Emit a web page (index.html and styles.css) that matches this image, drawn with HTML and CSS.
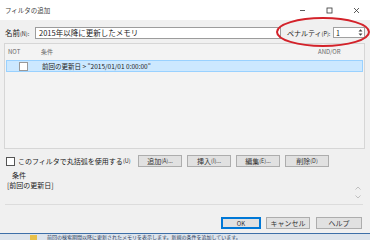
FILE: index.html
```html
<!DOCTYPE html>
<html lang="ja">
<head>
    <meta charset="UTF-8">
    <title>フィルタの追加</title>
    <link rel="stylesheet" href="styles.css">
</head>
<body>
    <div class="window">
        <div class="titlebar">
            <span class="title">フィルタの追加</span>
            <div class="controls">
                <span class="ctl"><svg width="7" height="7" viewBox="0 0 7 7"><path d="M1 3.5h5" stroke="#333" stroke-width="0.8"/></svg></span>
                <span class="ctl"><svg width="7" height="7" viewBox="0 0 7 7"><rect x="1" y="1" width="5" height="5" fill="none" stroke="#333" stroke-width="0.8"/></svg></span>
                <span class="ctl"><svg width="7" height="7" viewBox="0 0 7 7"><path d="M1 1l5 5M6 1l-5 5" stroke="#333" stroke-width="0.8"/></svg></span>
            </div>
        </div>

        <div class="content">
            <div class="name-row">
                <label class="name-label">名前<small>(N):</small></label>
                <div class="text-input">2015年以降に更新したメモリ</div>
                <label class="penalty-label">ペナルティ<small>(P):</small></label>
                <div class="spinner">
                    <span>1</span>
                    <span class="spin-arrows">
                        <svg width="5" height="9" viewBox="0 0 5 9"><path d="M0.5 3.5L2.5 1.2 4.5 3.5Z M0.5 5.5L2.5 7.8 4.5 5.5Z" fill="#444"/></svg>
                    </span>
                </div>
            </div>

            <div class="list">
                <div class="list-head">
                    <span class="col-not">NOT</span>
                    <span class="col-cond">条件</span>
                    <span class="col-andor">AND/OR</span>
                </div>
                <div class="list-row selected">
                    <span class="col-not"><span class="check"></span></span>
                    <span class="col-cond">前回の更新日 &gt; "2015/01/01 0:00:00"</span>
                </div>
            </div>

            <div class="options-row">
                <label class="paren-option"><span class="check"></span>このフィルタで丸括弧を使用する<small>(U)</small></label>
                <div class="btn-group">
                    <button class="btn">追加<small>(A)...</small></button>
                    <button class="btn">挿入<small>(I)...</small></button>
                    <button class="btn">編集<small>(E)...</small></button>
                    <button class="btn">削除<small>(D)</small></button>
                </div>
            </div>

            <div class="cond-panel">
                <div class="cond-title">条件</div>
                <div class="cond-text">[前回の更新日]</div>
                <div class="cond-scroll">
                    <svg width="6" height="4" viewBox="0 0 6 4"><path d="M0.5 3.5L3 1 5.5 3.5" fill="none" stroke="#aaa" stroke-width="0.7"/></svg>
                    <svg width="6" height="4" viewBox="0 0 6 4"><path d="M0.5 0.5L3 3 5.5 0.5" fill="none" stroke="#aaa" stroke-width="0.7"/></svg>
                </div>
            </div>

            <div class="footer">
                <button class="btn btn-ok">OK</button>
                <button class="btn btn-cancel">キャンセル</button>
                <button class="btn btn-help">ヘルプ</button>
            </div>
        </div>
    </div>

    <div class="behind">
        <span class="behind-icon"></span>
        <span>前回の検索期間以降に更新されたメモリを表示します。新規の条件を追加しています。</span>
    </div>

    <svg class="highlight" width="96" height="32" viewBox="0 0 96 32">
        <ellipse cx="48" cy="16" rx="46" ry="14" fill="none" stroke="#d3222a" stroke-width="2"/>
    </svg>
</body>
</html>
```

FILE: styles.css
```css
body {
    margin: 0;
    width: 370px;
    height: 240px;
    overflow: hidden;
    position: relative;
    font-family: "Noto Sans CJK JP", sans-serif;
    font-size: 7px;
    color: #222;
    background-color: #f0f0f0;
}
small {
    font-size: 5.5px;
}
.window {
    height: 233px;
    background-color: #f0f0f0;
}
.titlebar {
    height: 20px;
    background-color: #fff;
    display: flex;
    align-items: center;
    padding-left: 5px;
}
.title {
    flex: 1;
    font-size: 6.5px;
    color: #444;
}
.controls {
    display: flex;
}
.ctl {
    width: 27px;
    display: flex;
    justify-content: center;
}
.content {
    padding: 7px 5px 0 5px;
}
.name-row {
    display: flex;
    align-items: center;
    height: 11px;
}
.name-label {
    width: 30px;
    font-size: 7.5px;
}
.text-input {
    width: 241px;
    height: 10px;
    line-height: 10px;
    padding-left: 3px;
    background-color: #fff;
    border: 1px solid #9c9c9c;
    font-size: 7.5px;
    white-space: nowrap;
}
.penalty-label {
    margin-left: 6px;
    width: 46px;
    font-size: 7px;
}
.spinner {
    width: 28px;
    height: 9px;
    border: 1px solid #a0a0a0;
    background-color: #fff;
    display: flex;
    align-items: center;
    justify-content: space-between;
    padding-left: 2px;
    font-size: 7px;
}
.spin-arrows {
    display: flex;
    width: 6px;
}
.list {
    margin-top: 5px;
    margin-left: -1px;
    height: 104px;
    width: 359px;
    border: 1px solid #d6d6d6;
    background-color: #f3f3f3;
}
.list-head {
    display: flex;
    align-items: center;
    height: 15px;
    color: #666;
    font-size: 6px;
}
.col-not {
    width: 30px;
    padding-left: 3px;
}
.col-cond {
    flex: 1;
    padding-left: 3px;
}
.col-andor {
    width: 46px;
}
.list-row {
    display: flex;
    align-items: center;
    height: 10px;
    margin: 1px 1px 0 1px;
    font-size: 6.5px;
}
.list-row.selected {
    background-color: #cce8ff;
    border: 1px solid #99d1ff;
}
.list-row .col-not {
    padding-left: 12px;
    width: 21px;
    display: flex;
}
.list-row .col-cond {
    padding-left: 2px;
}
.check {
    display: inline-block;
    width: 7px;
    height: 7px;
    border: 1px solid #999;
    background-color: #fff;
}
.options-row {
    display: flex;
    align-items: center;
    justify-content: space-between;
    margin-top: 6px;
    height: 12px;
    padding-right: 36px;
}
.paren-option {
    display: flex;
    align-items: center;
    font-size: 7px;
    margin-left: 1px;
}
.paren-option .check {
    margin-right: 3px;
    border-color: #555;
}
.btn-group {
    display: flex;
    gap: 5px;
}
.btn {
    height: 12px;
    width: 44px;
    padding: 0;
    font-family: "Noto Sans CJK JP", sans-serif;
    font-size: 7px;
    color: #333;
    background-color: #e1e1e1;
    border: 1px solid #adadad;
    display: flex;
    align-items: center;
    justify-content: center;
}
.cond-panel {
    position: relative;
    margin-top: 3px;
    height: 33px;
    width: 356px;
    padding-left: 2px;
    padding-top: 1px;
    border-bottom: 1px solid #dcdcdc;
    font-size: 7px;
}
.cond-title {
    padding-left: 5px;
    line-height: 9px;
}
.cond-text {
    line-height: 11px;
}
.cond-scroll {
    position: absolute;
    right: 2px;
    top: 16px;
    display: flex;
    flex-direction: column;
    gap: 5px;
}
.footer {
    display: flex;
    justify-content: flex-end;
    gap: 5px;
    margin-top: 12px;
    padding-right: 3px;
}
.btn-ok {
    width: 40px;
    border: 1px solid #0078d7;
    box-shadow: inset 0 0 0 1px #0078d7;
    font-size: 6px;
}
.btn-cancel {
    width: 44px;
}
.btn-help {
    width: 46px;
    margin-left: 1px;
}
.behind {
    height: 6px;
    border-top: 1px solid #3d6fa8;
    background-color: #dde4ec;
    color: #2a3d5c;
    font-size: 5px;
    line-height: 6px;
    white-space: nowrap;
    overflow: hidden;
    display: flex;
    align-items: center;
    padding-left: 30px;
    gap: 10px;
}
.behind-icon {
    display: inline-block;
    width: 7px;
    height: 5px;
    background-color: #e8c04a;
}
.highlight {
    position: absolute;
    left: 275px;
    top: 16px;
}
```
